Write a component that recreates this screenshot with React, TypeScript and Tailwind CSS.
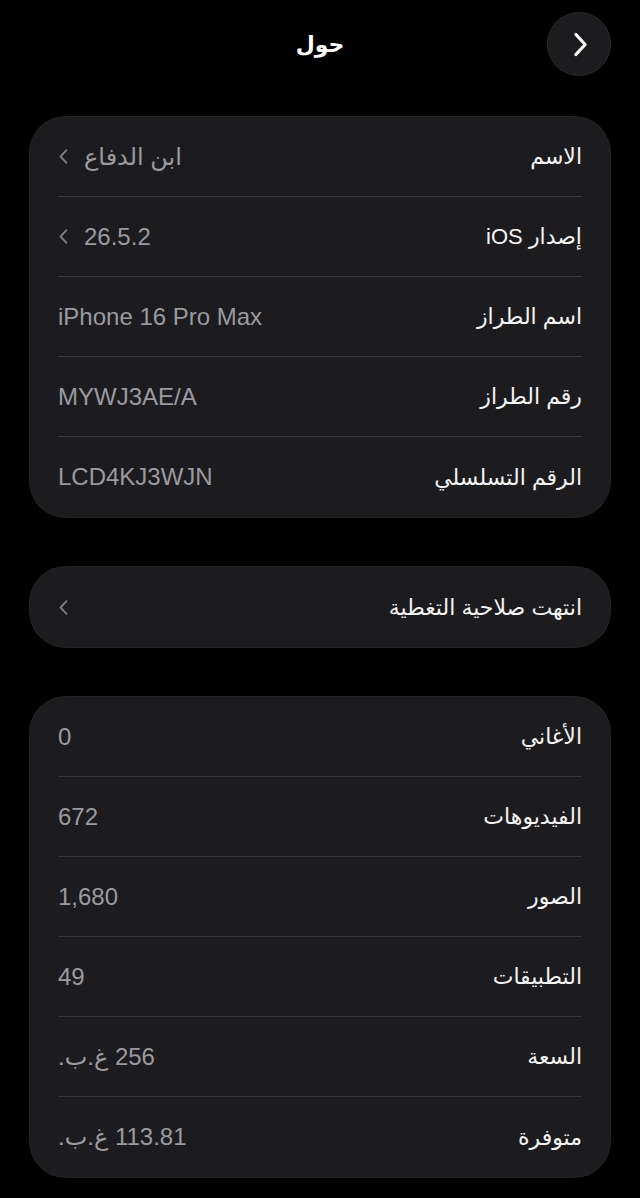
type Row = {
  label: string;
  value?: string;
  chevron?: boolean;
};

const deviceRows: Row[] = [
  { label: "الاسم", value: "ابن الدفاع", chevron: true },
  { label: "إصدار iOS", value: "26.5.2", chevron: true },
  { label: "اسم الطراز", value: "iPhone 16 Pro Max" },
  { label: "رقم الطراز", value: "MYWJ3AE/A" },
  { label: "الرقم التسلسلي", value: "LCD4KJ3WJN" },
];

const mediaRows: Row[] = [
  { label: "الأغاني", value: "0" },
  { label: "الفيديوهات", value: "672" },
  { label: "الصور", value: "1,680" },
  { label: "التطبيقات", value: "49" },
  { label: "السعة", value: "256 غ.ب." },
  { label: "متوفرة", value: "113.81 غ.ب." },
];

// points left or right on screen, whatever the text direction
function Chevron({ dir, className }: { dir: "left" | "right"; className?: string }) {
  return (
    <svg viewBox="0 0 12 20" fill="none" className={className}>
      <path
        d={dir === "left" ? "M9.5 2.5 L2.5 10 L9.5 17.5" : "M2.5 2.5 L9.5 10 L2.5 17.5"}
        stroke="currentColor"
        strokeWidth={2.2}
        strokeLinecap="round"
        strokeLinejoin="round"
      />
    </svg>
  );
}

function SettingsRow({ row, last }: { row: Row; last: boolean }) {
  return (
    <div className="px-[28px]">
      <div
        className={`flex h-[80px] items-center justify-between ${
          last ? "" : "border-b border-[#38383b]"
        }`}
      >
        <span className="text-[22px] text-[#f4f4f5]">{row.label}</span>
        <div className="flex items-center gap-[15px] text-[#9a9a9f]">
          {row.value && <span className="text-[24px]">{row.value}</span>}
          {row.chevron && (
            <Chevron dir="left" className="h-[17px] w-[11px] text-[#7c7c81]" />
          )}
        </div>
      </div>
    </div>
  );
}

function Card({ rows }: { rows: Row[] }) {
  return (
    <div className="mx-[30px] overflow-hidden rounded-[36px] bg-[#1c1c1e] ring-1 ring-[#232325]">
      {rows.map((row, i) => (
        <SettingsRow key={row.label} row={row} last={i === rows.length - 1} />
      ))}
    </div>
  );
}

export default function App() {
  return (
    <div
      dir="rtl"
      className="box-border min-h-[1198px] bg-black pt-[12px] pb-8"
      style={{ fontFamily: '"Liberation Sans", "DejaVu Sans", sans-serif' }}
    >
      <div className="grid h-[64px] grid-cols-[1fr_auto_1fr] items-center px-[29px]">
        <button
          type="button"
          className="flex h-[64px] w-[64px] items-center justify-center justify-self-start rounded-full border border-[#2c2c2e] bg-[#1c1c1e]"
        >
          <Chevron dir="right" className="ml-[2px] h-[27px] w-[17px] text-white" />
        </button>
        <h1 className="text-[22px] font-semibold text-white">حول</h1>
        <div />
      </div>

      <div className="mt-[41px] space-y-[50px]">
        <Card rows={deviceRows} />
        <Card rows={[{ label: "انتهت صلاحية التغطية", chevron: true }]} />
        <Card rows={mediaRows} />
      </div>
    </div>
  );
}
